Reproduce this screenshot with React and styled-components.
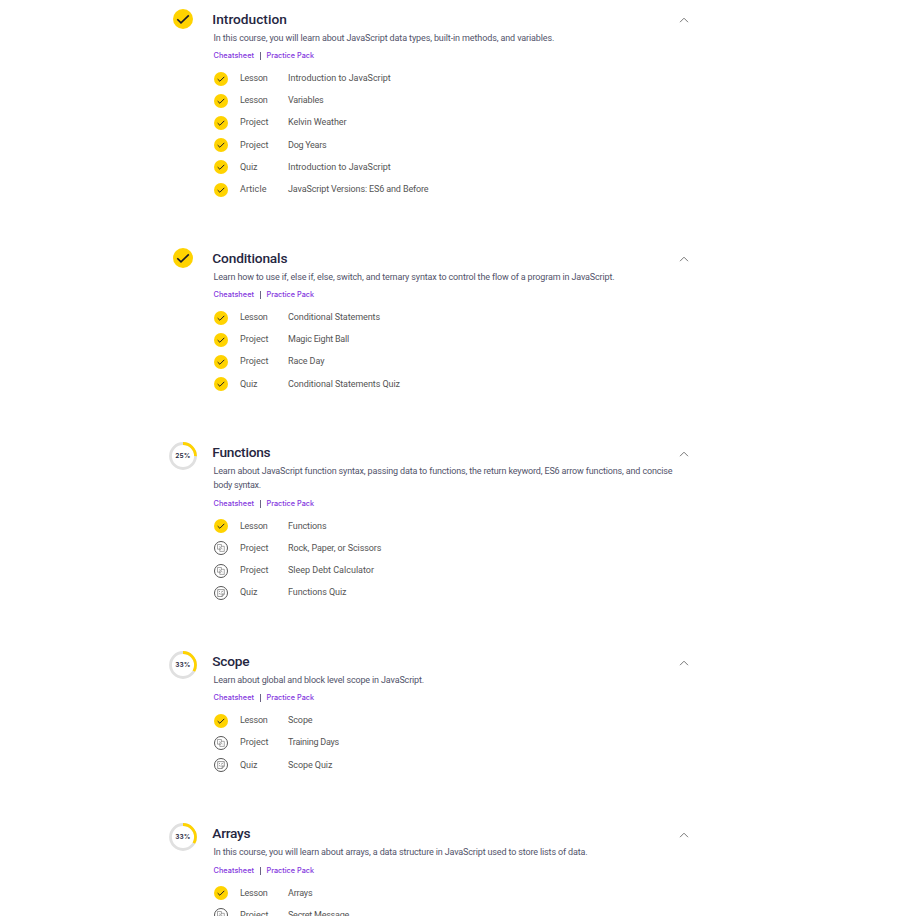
import React, { useLayoutEffect, useRef, useState } from "react";
import styled, { createGlobalStyle } from "styled-components";

const GlobalStyle = createGlobalStyle`
  html, body { margin: 0; background: #fff; }
  body { height: 916px; overflow: hidden; font-family: Roboto, "Liberation Sans", sans-serif; }
  * { box-sizing: border-box; }
`;

const Page = styled.main`
  width: 910px;
  height: 916px;
  overflow: hidden;
  padding: 8.9px 0 0 169px;
`;
const Module = styled.section`
  display: grid;
  grid-template-columns: 28px 459px 24px;
  column-gap: 16px;
  padding-bottom: 47.75px;
`;
const Status = styled.div`
  display: flex;
  justify-content: center;
  align-items: flex-start;
  height: 28px;
  svg { display: block; flex: none; }
`;
const Body = styled.div`
  min-width: 0;
`;
const Title = styled.h2`
  margin: 0 0 0 -0.7px;
  height: 22px;
  font-size: 13.7px;
  line-height: 21px;
  font-weight: 500;
  color: #25263f;
  white-space: nowrap;
`;
const Description = styled.p`
  margin: 0 0 6.1px;
  padding-left: 0.5px;
  font-size: 9px;
  line-height: 14px;
  color: #52536a;
  white-space: nowrap;
`;
const Line = styled.span`
  display: block;
`;
const Links = styled.div`
  display: flex;
  align-items: center;
  height: 10px;
  padding-left: 0.5px;
  margin-bottom: 6px;
  font-size: 7.3px;
  line-height: 10px;
  color: #8437de;
  font-family: Inter, "Open Sans", sans-serif;
  font-weight: 500;
`;
const Link = styled.a`
  width: ${(p) => p.$w}px;
  white-space: nowrap;
`;
const Divider = styled.i`
  width: 1px;
  height: 8px;
  margin: 0 5.5px 0 6px;
  background: #6b6484;
`;
const List = styled.ul`
  margin: 0;
  padding: 0;
  list-style: none;
`;
const Row = styled.li`
  display: grid;
  grid-template-columns: 27px 48px 1fr;
  align-items: center;
  height: 22.2px;
  font-size: 9px;
  line-height: 14px;
  color: #555;
  white-space: nowrap;
  svg { display: block; margin: 1.2px 0 0 1px; }
`;
const Toggle = styled.button`
  width: 24px;
  height: 22px;
  margin-left: -16px;
  padding: 1px 0 0;
  border: 0;
  background: none;
  display: flex;
  align-items: center;
  justify-content: center;
`;
const Fitted = styled.span`
  display: inline-block;
  white-space: nowrap;
`;

/* Tracks a piece of text so that it spans the given width. */
function Fit({ width, children }) {
  const ref = useRef(null);
  const [spacing, setSpacing] = useState(0);
  useLayoutEffect(() => {
    const natural = ref.current.getBoundingClientRect().width;
    setSpacing((width - natural) / children.length);
  }, [width, children]);
  return <Fitted ref={ref} style={{ letterSpacing: `${spacing}px` }}>{children}</Fitted>;
}

function Check({ size }) {
  const large = size > 16;
  return (
    <svg width={size} height={size} viewBox="0 0 20 20">
      <circle cx="10" cy="10" r="10" fill="#ffd300" />
      <path
        d={large ? "M4.3 10.2 8 13.8 15.8 6.3" : "M5.2 10.2 8.4 13.2 14.7 6.9"}
        fill="none" stroke="#1b1b25" strokeWidth={large ? 1.6 : 1.4}
      />
    </svg>
  );
}
function Ring({ value }) {
  const c = 2 * Math.PI * 12.5;
  return (
    <svg width="28" height="28" viewBox="0 0 28 28">
      <circle cx="14" cy="14" r="12.5" fill="none" stroke="#e0e0e0" strokeWidth="2.8" />
      <circle cx="14" cy="14" r="12.5" fill="none" stroke="#ffd300" strokeWidth="2.8"
        strokeDasharray={`${(c * value) / 100} ${c}`} transform="rotate(-90 14 14)" />
      <text x="13.8" y="16.2" textAnchor="middle" textLength="15" fontFamily="Inter, sans-serif" fontSize="6.6" fontWeight="600" fill="#25263c">{value}%</text>
    </svg>
  );
}
function ProjectIcon() {
  return (
    <svg width="14" height="14" viewBox="0 0 14 14" fill="none" stroke="#555">
      <circle cx="7" cy="7" r="6.5" strokeWidth="1" />
      <path d="M3.5 3.5H7.4V5.3H10.3V10.4H5.8V8.2H3.5ZM5.5 5.3 8.5 8.3M5.8 6.5V8.2H7.1M7.4 5.3V6.3" strokeWidth=".5" />
    </svg>
  );
}
function QuizIcon() {
  return (
    <svg width="14" height="14" viewBox="0 0 14 14" fill="none" stroke="#555">
      <circle cx="7" cy="7" r="6.5" strokeWidth="1" />
      <path d="M3.7 3.6h6.6v4.5L8.2 10.5H3.7zM10.3 8.1H8.2v2.4M5 5.5h1M7 5.6l.7.6 1.3-1.4M5 7.7h1M6.5 8l.6.5 1-1.2" strokeWidth=".6" />
    </svg>
  );
}

const KIND_WIDTH = { Lesson: 27.5, Project: 28.5, Quiz: 17.5, Article: 26.5 };
const modules = [
  { title: ["Introduction", 74.5], done: true,
    text: [["In this course, you will learn about JavaScript data types, built-in methods, and variables.", 340.8]],
    items: [["Lesson", "Introduction to JavaScript", 102.8, 1], ["Lesson", "Variables", 35.4, 1], ["Project", "Kelvin Weather", 58.5, 1], ["Project", "Dog Years", 38.4, 1], ["Quiz", "Introduction to JavaScript", 102.8, 1], ["Article", "JavaScript Versions: ES6 and Before", 140.5, 1]] },
  { title: ["Conditionals", 75], done: true,
    text: [["Learn how to use if, else if, else, switch, and ternary syntax to control the flow of a program in JavaScript.", 400.8]],
    items: [["Lesson", "Conditional Statements", 92, 1], ["Project", "Magic Eight Ball", 61, 1], ["Project", "Race Day", 36.3, 1], ["Quiz", "Conditional Statements Quiz", 112, 1]] },
  { title: ["Functions", 58], value: 25,
    text: [["Learn about JavaScript function syntax, passing data to functions, the return keyword, ES6 arrow functions, and concise", 459], ["body syntax.", 47.5]],
    items: [["Lesson", "Functions", 38.5, 1], ["Project", "Rock, Paper, or Scissors", 93.3], ["Project", "Sleep Debt Calculator", 86], ["Quiz", "Functions Quiz", 58.4]] },
  { title: ["Scope", 37], value: 33,
    text: [["Learn about global and block level scope in JavaScript.", 210.5]],
    items: [["Lesson", "Scope", 24.5, 1], ["Project", "Training Days", 51], ["Quiz", "Scope Quiz", 44.4]] },
  { title: ["Arrays", 38], value: 33,
    text: [["In this course, you will learn about arrays, a data structure in JavaScript used to store lists of data.", 374]],
    items: [["Lesson", "Arrays", 24.4, 1], ["Project", "Secret Message", 61]] },
];

export default function App() {
  return (
    <>
      <GlobalStyle />
      <Page>
        {modules.map((m) => (
          <Module key={m.title[0]}>
            <Status>{m.done ? <Check size={20} /> : <Ring value={m.value} />}</Status>
            <Body>
              <Title><Fit width={m.title[1]}>{m.title[0]}</Fit></Title>
              <Description>
                {m.text.map(([t, w]) => <Line key={t}><Fit width={w}>{t}</Fit></Line>)}
              </Description>
              <Links>
                <Link $w={40.5}><Fit width={40.5}>Cheatsheet</Fit></Link>
                <Divider />
                <Link $w={48}><Fit width={47.6}>Practice Pack</Fit></Link>
              </Links>
              <List>
                {m.items.map(([kind, name, w, done], i) => (
                  <Row key={i}>
                    {done ? <Check size={14} /> : kind === "Quiz" ? <QuizIcon /> : <ProjectIcon />}
                    <span><Fit width={KIND_WIDTH[kind]}>{kind}</Fit></span>
                    <span><Fit width={w}>{name}</Fit></span>
                  </Row>
                ))}
              </List>
            </Body>
            <Toggle aria-label="Collapse">
              <svg width="10" height="6" viewBox="0 0 10 6"><path d="M1 5.2 5 1.2 9 5.2" fill="none" stroke="#777" strokeWidth="1" /></svg>
            </Toggle>
          </Module>
        ))}
      </Page>
    </>
  );
}
